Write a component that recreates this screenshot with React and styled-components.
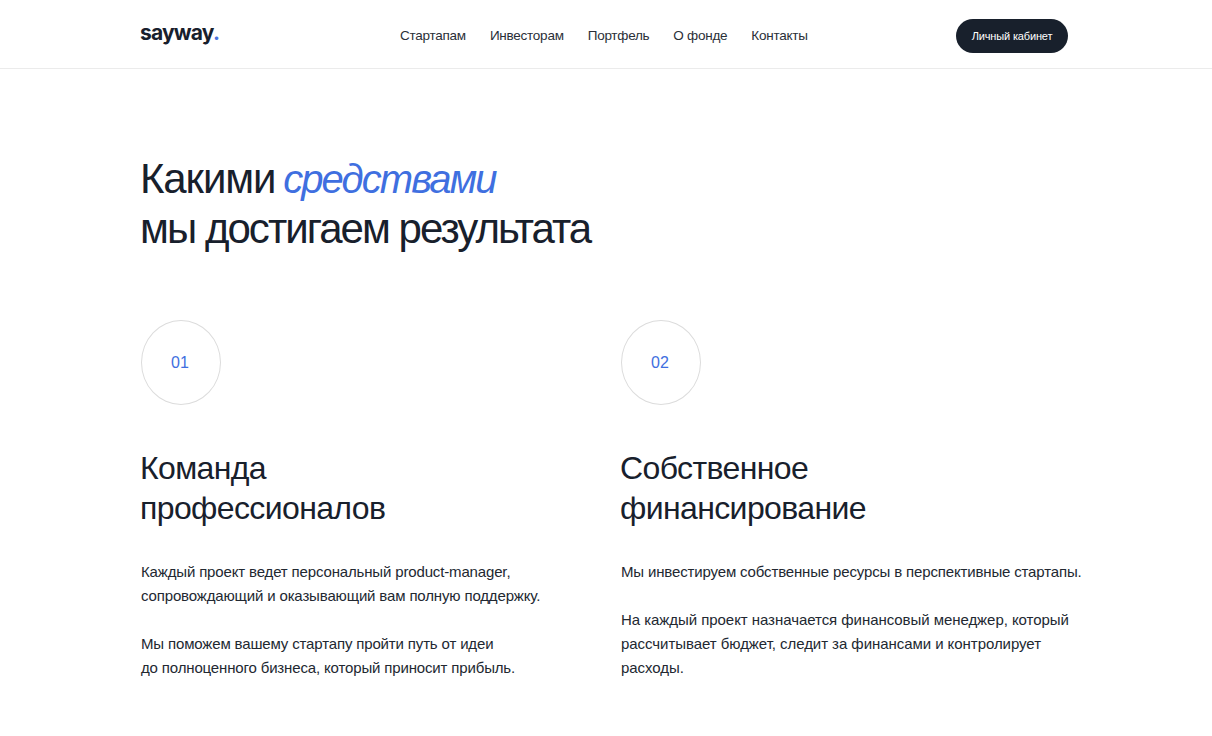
import React from 'react'
import styled, { createGlobalStyle } from 'styled-components'

const Global = createGlobalStyle`
    html, body {
        margin: 0;
        padding: 0;
        background: #fff;
    }
    body {
        font-family: "Liberation Sans", Arial, sans-serif;
        color: #18202c;
    }
`

const Header = styled.header`
    height: 64px;
    border-bottom: 1px solid #ebebeb;
    padding: 4px 144px 0 141px;
    display: flex;
    align-items: center;
`
const Logo = styled.div`
    width: 259px;
    margin: -6px 0 0 -1px;
    font-family: Inter, "Liberation Sans", sans-serif;
    font-size: 21px;
    font-weight: 700;
    letter-spacing: -0.8px;
    line-height: 26px;
    color: #18202c;
    span {
        color: #4a74e0;
    }
`
const Nav = styled.nav`
    display: flex;
    gap: 24px;
    flex: 1;
    margin-left: 1px;
`
const NavLink = styled.a`
    font-size: 13.5px;
    letter-spacing: -0.25px;
    line-height: 18px;
    color: #2a2f38;
`
const CabinetBtn = styled.button`
    width: 112px;
    height: 34px;
    border: 0;
    border-radius: 17px;
    background: #18202c;
    color: #fff;
    font-family: inherit;
    font-size: 11px;
    letter-spacing: -0.15px;
    padding: 0;
`
const Main = styled.main`
    padding: 85px 120px 0 141px;
`
const Title = styled.h1`
    margin: 0 0 0 -1px;
    font-size: 42px;
    line-height: 50px;
    font-weight: 400;
    letter-spacing: -1.95px;
    color: #18202c;
`
const TitleLead = styled.span`
    letter-spacing: -1.1px;
`
const TitleAccent = styled.em`
    margin-left: -2px;
    color: #3f6fe0;
    font-size: 40px;
    font-style: italic;
    letter-spacing: -1.9px;
`
const Columns = styled.div`
    display: grid;
    grid-template-columns: 480px 1fr;
    margin-top: 66px;
`
const Column = styled.section`
    display: flex;
    flex-direction: column;
    align-items: flex-start;
`
const Num = styled.div`
    width: 80px;
    height: 85px;
    box-sizing: border-box;
    padding-right: 2px;
    border: 1px solid #dcdcdc;
    border-radius: 50%;
    display: flex;
    align-items: center;
    justify-content: center;
    font-size: 16px;
    color: #3f6fe0;
    margin-bottom: 43px;
`
const CardTitle = styled.h2`
    margin: 0 0 32px -1px;
    font-size: 32px;
    line-height: 40px;
    font-weight: 400;
    letter-spacing: -0.62px;
    color: #18202c;
`
const Text = styled.p`
    margin: 0 0 24px;
    font-size: 15px;
    line-height: 24px;
    letter-spacing: ${(p) => (p.$wide ? '-0.05px' : '-0.15px')};
    color: #222831;
`

export default function App() {
  return (
    <>
        <Global/>
        <Header>
            <Logo>sayway<span>.</span></Logo>
            <Nav>
                <NavLink>Стартапам</NavLink>
                <NavLink>Инвесторам</NavLink>
                <NavLink>Портфель</NavLink>
                <NavLink>О фонде</NavLink>
                <NavLink>Контакты</NavLink>
            </Nav>
            <CabinetBtn>Личный кабинет</CabinetBtn>
        </Header>

        <Main>
            <Title><TitleLead>Какими</TitleLead> <TitleAccent>средствами</TitleAccent><br/>мы достигаем результата</Title>

            <Columns>
                <Column>
                    <Num>01</Num>
                    <CardTitle>Команда<br/>профессионалов</CardTitle>
                    <Text>Каждый проект ведет персональный product-manager,<br/>сопровождающий и оказывающий вам полную поддержку.</Text>
                    <Text>Мы поможем вашему стартапу пройти путь от идеи<br/>до полноценного бизнеса, который приносит прибыль.</Text>
                </Column>
                <Column>
                    <Num>02</Num>
                    <CardTitle>Собственное<br/>финансирование</CardTitle>
                    <Text>Мы инвестируем собственные ресурсы в перспективные стартапы.</Text>
                    <Text $wide>На каждый проект назначается финансовый менеджер, который<br/>рассчитывает бюджет, следит за финансами и контролирует<br/>расходы.</Text>
                </Column>
            </Columns>
        </Main>
    </>
  )
}
